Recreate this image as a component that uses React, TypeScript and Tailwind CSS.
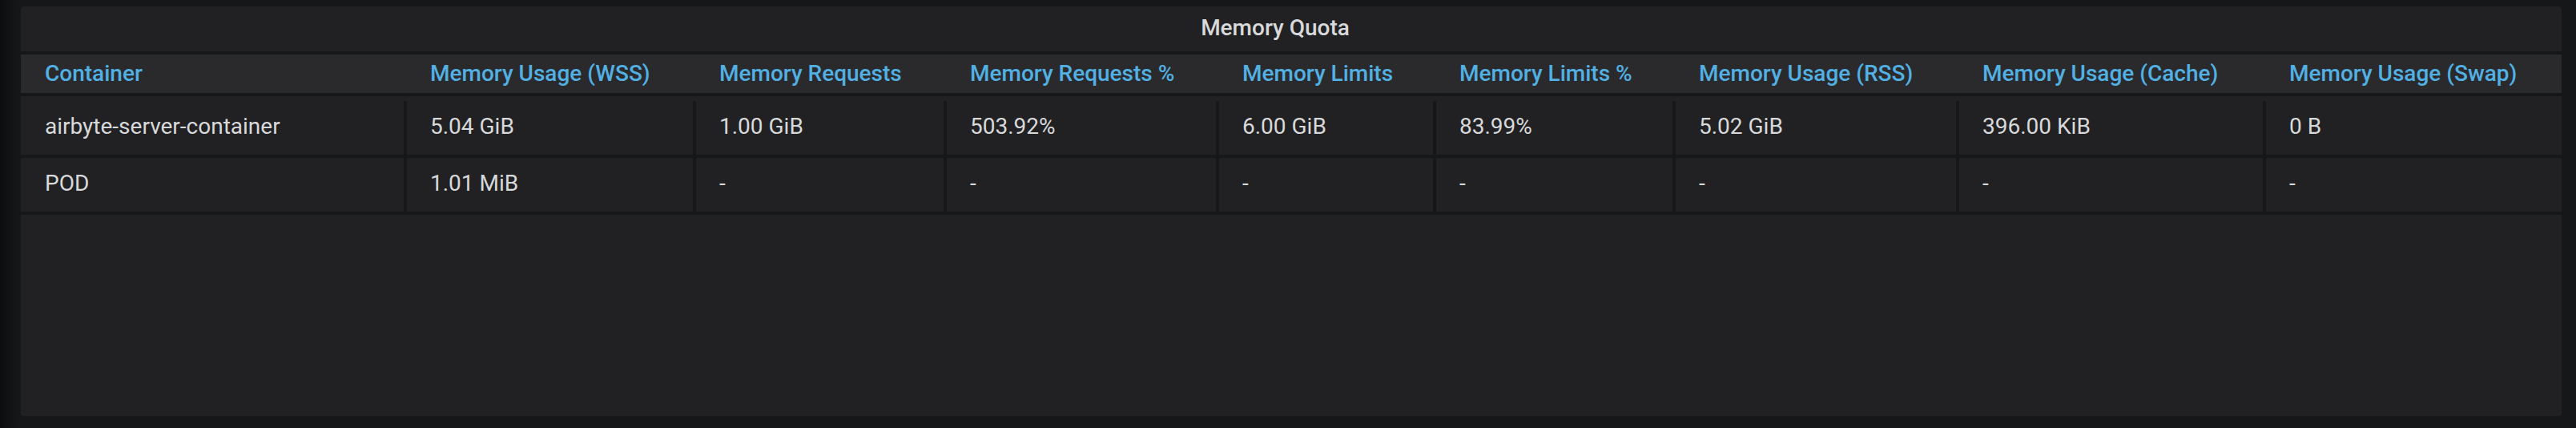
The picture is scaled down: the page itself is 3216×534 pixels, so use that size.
const columns = [
  { title: "Container", width: 478 },
  { title: "Memory Usage (WSS)", width: 361 },
  { title: "Memory Requests", width: 313 },
  { title: "Memory Requests %", width: 340 },
  { title: "Memory Limits", width: 271 },
  { title: "Memory Limits %", width: 299 },
  { title: "Memory Usage (RSS)", width: 354 },
  { title: "Memory Usage (Cache)", width: 383 },
  { title: "Memory Usage (Swap)", width: 373 },
];

const rows = [
  [
    "airbyte-server-container",
    "5.04 GiB",
    "1.00 GiB",
    "503.92%",
    "6.00 GiB",
    "83.99%",
    "5.02 GiB",
    "396.00 KiB",
    "0 B",
  ],
  ["POD", "1.01 MiB", "-", "-", "-", "-", "-", "-", "-"],
];

const gridCols =
  "grid grid-cols-[478px_361px_313px_340px_271px_299px_354px_383px_373px]";

export default function App() {
  return (
    <div
      className="w-[3216px] h-[534px] pt-[8px] pl-[26px] bg-[linear-gradient(to_right,#0d0e10,#161719_24px)]"
      style={{ fontFamily: "Roboto, 'Liberation Sans', sans-serif" }}
    >
      <div className="w-[3172px] h-[511px] bg-[#212124] rounded-[4px] overflow-hidden flex flex-col">
        {/* panel title */}
        <div className="h-[56px] flex items-center justify-center pr-[40px] pb-[2px] text-[28px] leading-none font-medium text-[#d8d9da]">
          Memory Quota
        </div>
        <div className="h-[4px] bg-[#161719]" />

        {/* header */}
        <div className={`${gridCols} h-[48px] bg-[#2a2a2d]`}>
          {columns.map((c, i) => (
            <div
              key={c.title}
              className={`flex items-center text-[28px] leading-none font-medium text-[#52b0e3] whitespace-nowrap ${
                i === 0 ? "pl-[30px]" : "pl-[33px]"
              }`}
            >
              {c.title}
            </div>
          ))}
        </div>
        <div className="h-[4px] bg-[#161719]" />
        <div className="h-[6px]" />

        {/* body */}
        {rows.map((row, r) => (
          <div key={r}>
            <div className={`${gridCols} h-[67px]`}>
              {row.map((val, i) => (
                <div
                  key={i}
                  className={`flex items-center pb-[3px] text-[28px] leading-none text-[#d8d9da] whitespace-nowrap ${
                    i === 0 ? "pl-[30px]" : "pl-[29px] border-l-4 border-[#161719]"
                  }`}
                >
                  {val}
                </div>
              ))}
            </div>
            <div className="h-[4px] bg-[#161719]" />
          </div>
        ))}
      </div>
    </div>
  );
}
